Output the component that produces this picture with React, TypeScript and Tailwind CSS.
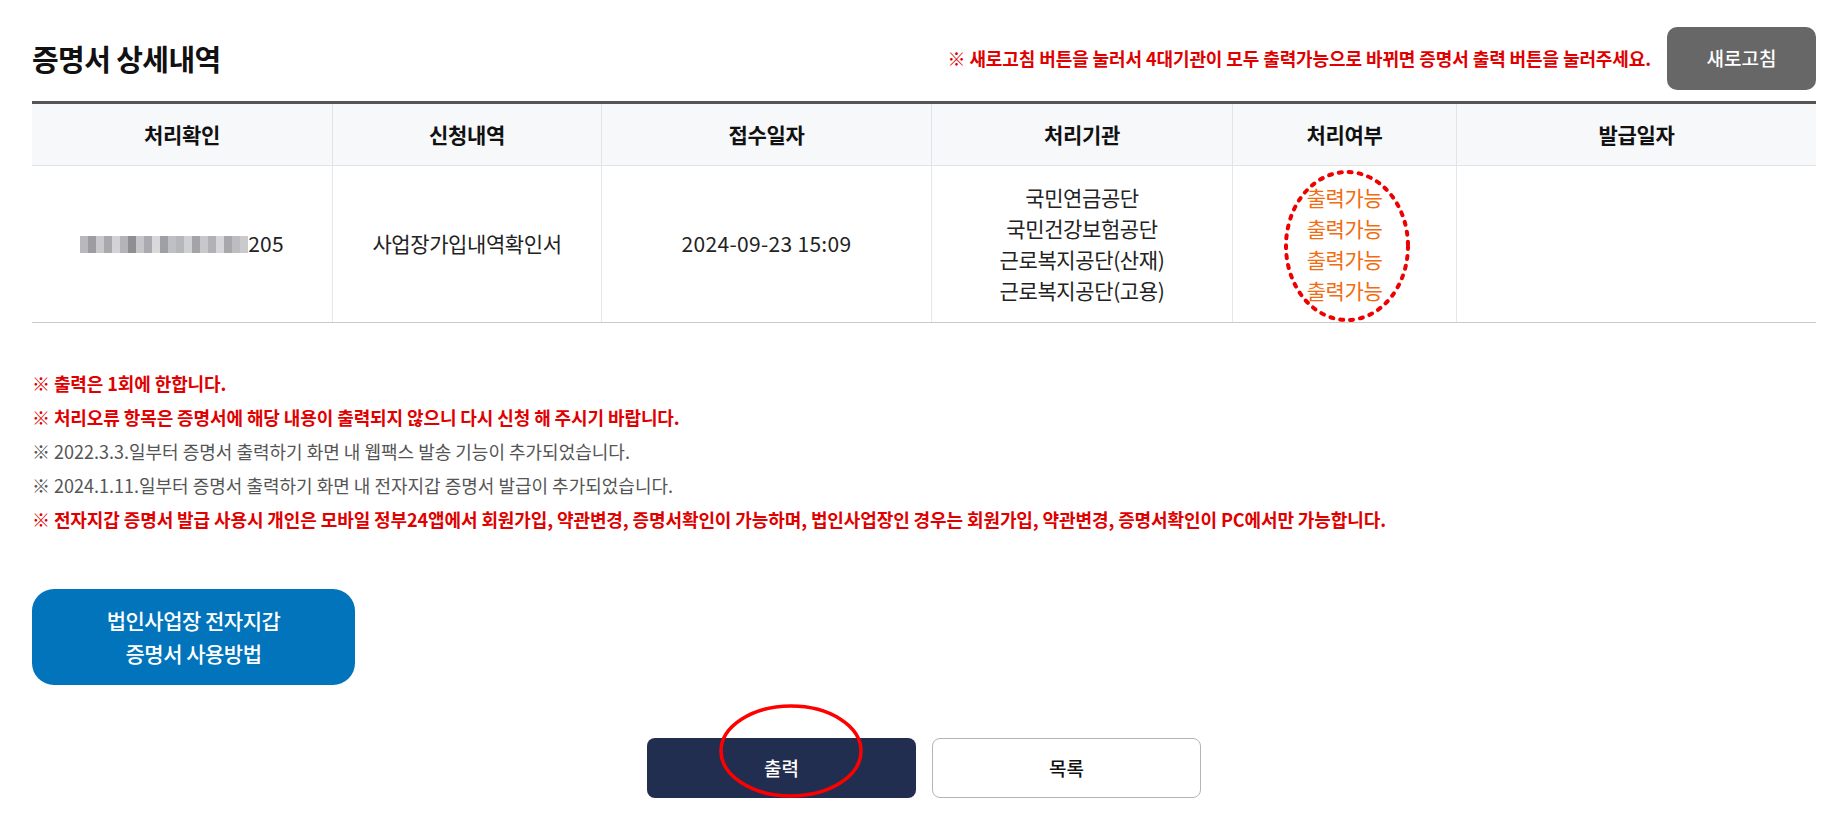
import React from 'react';

const FONT = { fontFamily: '"Noto Sans CJK KR", "Noto Sans", sans-serif' };

const agencies = ['국민연금공단', '국민건강보험공단', '근로복지공단(산재)', '근로복지공단(고용)'];

// pixelated blur in place of the masked number
const blurShades = [
  '#b9b9bb', '#9d9ca0', '#c9c8cc', '#a9a8ac', '#d3d3d6', '#b4b3b8', '#8f8e93', '#c6c6ca',
  '#aaaab0', '#d9d9dc', '#9fa0a6', '#c0c0c4', '#b7b6bb', '#cfd0d4', '#a4a3a8', '#c8c8cc',
  '#b1b1b6', '#d6d6d9', '#a7a7ac', '#bdbdc1', '#cacacd',
];

const notes = [
  { text: '※ 출력은 1회에 한합니다.', red: true },
  { text: '※ 처리오류 항목은 증명서에 해당 내용이 출력되지 않으니 다시 신청 해 주시기 바랍니다.', red: true },
  { text: '※ 2022.3.3.일부터 증명서 출력하기 화면 내 웹팩스 발송 기능이 추가되었습니다.', red: false },
  { text: '※ 2024.1.11.일부터 증명서 출력하기 화면 내 전자지갑 증명서 발급이 추가되었습니다.', red: false },
  {
    text: '※ 전자지갑 증명서 발급 사용시 개인은 모바일 정부24앱에서 회원가입, 약관변경, 증명서확인이 가능하며, 법인사업장인 경우는 회원가입, 약관변경, 증명서확인이 PC에서만 가능합니다.',
    red: true,
  },
];

const headers = [
  { label: '처리확인', w: 'w-[301px]' },
  { label: '신청내역', w: 'w-[269px]' },
  { label: '접수일자', w: 'w-[330px]' },
  { label: '처리기관', w: 'w-[301px]' },
  { label: '처리여부', w: 'w-[224px]' },
  { label: '발급일자', w: 'flex-1' },
];

export default function App() {
  return (
    <div className="min-h-[831px] bg-white px-8 pt-[27px] text-[#222]" style={FONT}>
      {/* title row */}
      <div className="flex items-center justify-between">
        <h2 className="text-[29px] font-bold tracking-[-0.6px] text-[#111]">증명서 상세내역</h2>
        <div className="flex items-center gap-4">
          <p className="text-[18px] font-bold tracking-[-0.1px] text-[#e00000]">
            ※ 새로고침 버튼을 눌러서 4대기관이 모두 출력가능으로 바뀌면 증명서 출력 버튼을 눌러주세요.
          </p>
          <button className="h-[63px] w-[149px] rounded-[10px] bg-[#676767] text-[19px] font-medium text-white">
            새로고침
          </button>
        </div>
      </div>

      {/* table */}
      <div className="mt-[11px] border-t-[3px] border-[#555]">
        <div className="flex h-[62px] border-b border-[#e2e3e6] bg-[#f7f8fa]">
          {headers.map((h, i) => (
            <div
              key={h.label}
              className={`${h.w} flex items-center justify-center text-[21px] font-bold tracking-[-0.3px] text-[#111] ${i < headers.length - 1 ? 'border-r border-[#e2e3e6]' : ''}`}
            >
              {h.label}
            </div>
          ))}
        </div>
        <div className="flex h-[157px] border-b border-[#c9cacd] text-[21px] text-[#222]">
          <div className="flex w-[301px] items-center justify-center border-r border-[#e6e7ea]">
            <div className="flex h-[17px] blur-[0.6px]">
              {blurShades.map((c, i) => (
                <span key={i} className="h-full w-[8px]" style={{ backgroundColor: c }} />
              ))}
            </div>
            <span className="tracking-[0.2px]">205</span>
          </div>
          <div className="flex w-[269px] items-center justify-center border-r border-[#e6e7ea] tracking-[-0.4px]">
            사업장가입내역확인서
          </div>
          <div className="flex w-[330px] items-center justify-center border-r border-[#e6e7ea] tracking-[0.3px]">
            2024-09-23 15:09
          </div>
          <div className="flex w-[301px] flex-col items-center justify-center border-r border-[#e6e7ea] leading-[31px] tracking-[-0.4px]">
            {agencies.map((a) => (
              <span key={a}>{a}</span>
            ))}
          </div>
          <div className="relative flex w-[224px] flex-col items-center justify-center border-r border-[#e6e7ea] leading-[31px] tracking-[-0.4px] text-[#f26b0f]">
            {agencies.map((a) => (
              <span key={a}>출력가능</span>
            ))}
            <svg
              className="pointer-events-none absolute left-[49px] top-[2px]"
              width="130"
              height="156"
              viewBox="0 0 130 156"
            >
              <ellipse
                cx="65"
                cy="78"
                rx="61"
                ry="74"
                fill="none"
                stroke="#ee0000"
                strokeWidth="4"
                strokeDasharray="3 7"
                strokeLinecap="round"
              />
            </svg>
          </div>
          <div className="flex-1" />
        </div>
      </div>

      {/* notes */}
      <ul className="mt-[43px] flex flex-col text-[18px] leading-[34px]">
        {notes.map((n, i) => (
          <li key={i} className={n.red ? 'font-bold tracking-[-0.1px] text-[#e00000]' : 'tracking-[0px] text-[#555]'}>
            {n.text}
          </li>
        ))}
      </ul>

      {/* guide button */}
      <button className="mt-[53px] flex h-[96px] w-[323px] flex-col items-center justify-center rounded-[22px] bg-[#0274bb] text-[21px] font-medium leading-[33px] tracking-[-0.5px] text-white">
        <span>법인사업장 전자지갑</span>
        <span>증명서 사용방법</span>
      </button>

      {/* bottom actions */}
      <div className="mt-[53px] flex justify-center gap-4 pb-8">
        <div className="relative">
          <button className="h-[60px] w-[269px] rounded-[8px] bg-[#222e4f] text-[19px] font-medium text-white">
            출력
          </button>
          <svg
            className="pointer-events-none absolute left-[71px] top-[-35px]"
            width="146"
            height="96"
            viewBox="0 0 146 96"
          >
            <ellipse cx="73" cy="48" rx="70" ry="45" fill="none" stroke="#ff0000" strokeWidth="3.5" />
          </svg>
        </div>
        <button className="h-[60px] w-[269px] rounded-[8px] border border-[#b5b5b5] bg-white text-[19px] font-medium text-[#111]">
          목록
        </button>
      </div>
    </div>
  );
}
